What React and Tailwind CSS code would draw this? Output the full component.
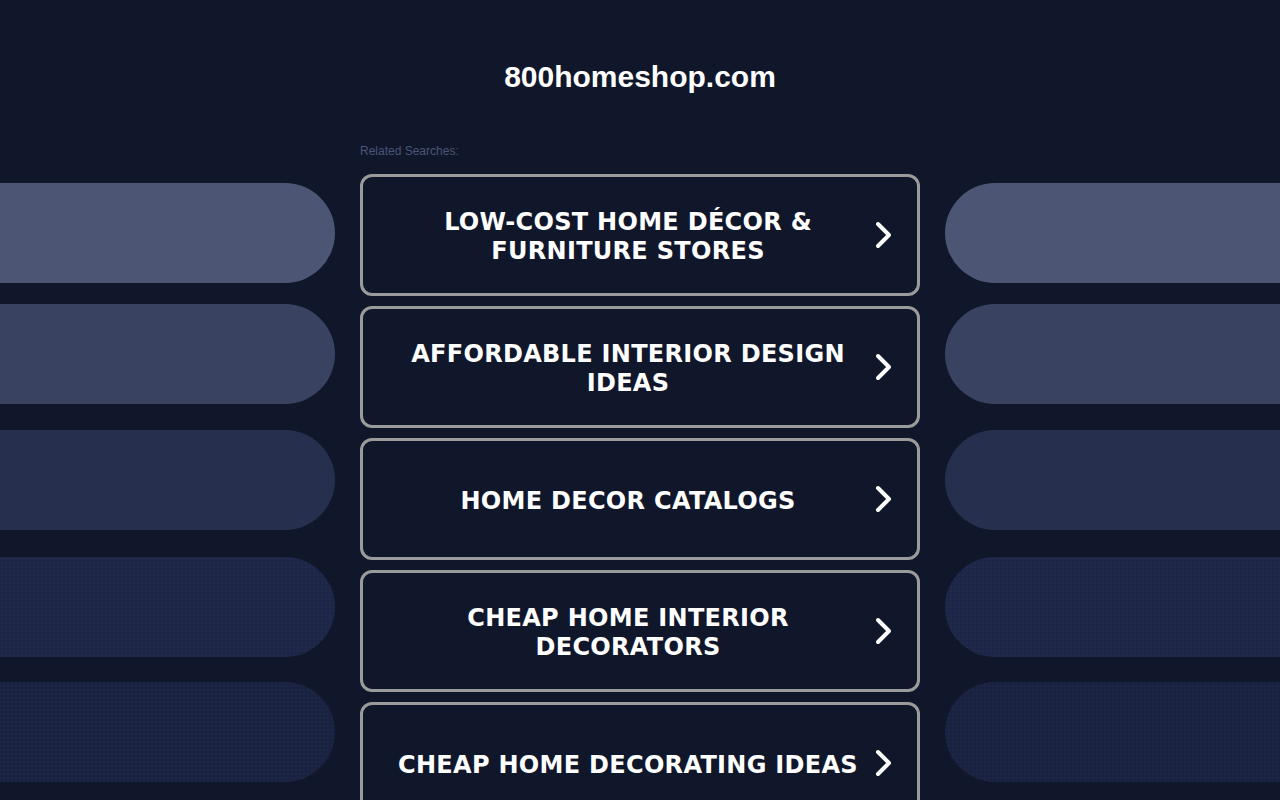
const pills = [
  { color: 'bg-[#4c5674]', gap: 'mt-0' },
  { color: 'bg-[#3a4261]', gap: 'mt-[21px]' },
  { color: 'bg-[#262f4e]', gap: 'mt-[26px]' },
  { color: 'bg-[#1d2646] bg-[radial-gradient(#263052_0.6px,transparent_0.8px)] bg-[length:4px_4px]', gap: 'mt-[27px]' },
  { color: 'bg-[#1c2444] bg-[radial-gradient(#151c36_0.6px,transparent_0.8px)] bg-[length:4px_4px]', gap: 'mt-[25px]' },
];

const searches = [
  'LOW-COST HOME DÉCOR & FURNITURE STORES',
  'AFFORDABLE INTERIOR DESIGN IDEAS',
  'HOME DECOR CATALOGS',
  'CHEAP HOME INTERIOR DECORATORS',
  'CHEAP HOME DECORATING IDEAS',
];

function Chevron() {
  return (
    <svg width="17" height="28" viewBox="0 0 17 28" fill="none">
      <path d="M3 3 L14 14 L3 25" stroke="white" strokeWidth="4" strokeLinecap="round" strokeLinejoin="round" />
    </svg>
  );
}

function SidePills({ side }) {
  const shape = side === 'left' ? 'rounded-r-full' : 'rounded-l-full';
  return (
    <div className="w-[335px] shrink-0 pt-[183px] flex flex-col">
      {pills.map((p, idx) => (
        <div key={idx} className={`h-[100px] ${shape} ${p.color} ${p.gap}`} />
      ))}
    </div>
  );
}

export default function App() {
  return (
    <div className="h-screen overflow-hidden bg-[#11172b] flex">
      <SidePills side="left" />

      {/* Center column */}
      <div className="w-[560px] shrink-0 mx-[25px] flex flex-col">
        <h1 className="pt-[59px] h-[95px] leading-[36px] text-[30px] font-bold text-white text-center font-['Liberation_Sans',Arial,sans-serif]">
          800homeshop.com
        </h1>
        <p className="mt-[48px] h-4 leading-4 text-[12px] text-[#4a5577] font-['Liberation_Sans',Arial,sans-serif]">
          Related Searches:
        </p>

        <div className="mt-[15px] flex flex-col gap-[10px]">
          {searches.map((text) => (
            <a
              key={text}
              href="#"
              className="h-[122px] shrink-0 border-[3px] border-[#9b9b9b] rounded-[12px] flex items-center pl-[30px] pr-[14px]"
            >
              <span className="flex-1 pt-[4px] text-center text-white text-[24px] leading-[29px] tracking-[0.3px] font-bold font-['DejaVu_Sans',Verdana,sans-serif]">
                {text}
              </span>
              <span className="w-10 flex items-center justify-center">
                <Chevron />
              </span>
            </a>
          ))}
        </div>
      </div>

      <SidePills side="right" />
    </div>
  );
}
